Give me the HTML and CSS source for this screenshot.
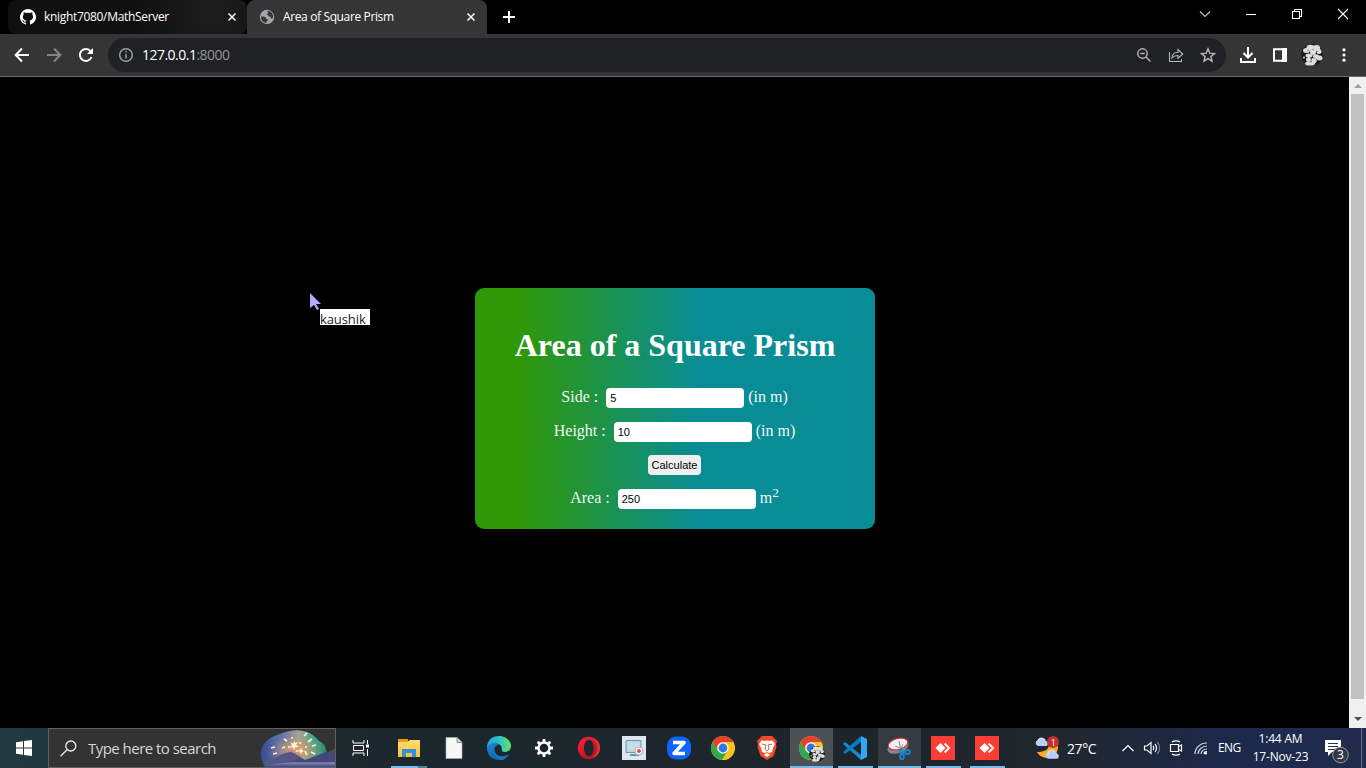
FILE: index.html
```html
<!DOCTYPE html>
<html lang="en">
<head>
<meta charset="utf-8">
<title>Area of Square Prism</title>
<link rel="stylesheet" href="styles.css">
</head>
<body>
<svg class="defs" width="0" height="0">
  <defs>
    <linearGradient id="edgeA" x1="0" y1="0" x2="1" y2="0"><stop offset="0" stop-color="#209fdf"/><stop offset=".55" stop-color="#2fc6c5"/><stop offset="1" stop-color="#6de05a"/></linearGradient>
    <linearGradient id="edgeB" x1="0" y1="0" x2="1" y2="1"><stop offset="0" stop-color="#1b8ddb"/><stop offset="1" stop-color="#0b4f97"/></linearGradient>
    <linearGradient id="opera" x1="0" y1="0" x2="1" y2="1"><stop offset="0" stop-color="#ff2436"/><stop offset="1" stop-color="#a90818"/></linearGradient>
    <linearGradient id="folder" x1="0" y1="0" x2="0" y2="1"><stop offset="0" stop-color="#ffdc72"/><stop offset="1" stop-color="#f8c13c"/></linearGradient>
    <linearGradient id="sky" x1="0" y1="0" x2="1" y2="0"><stop offset="0" stop-color="#334a91"/><stop offset=".3" stop-color="#6678a8"/><stop offset=".52" stop-color="#a9a396"/><stop offset=".72" stop-color="#32aa89"/><stop offset="1" stop-color="#287461"/></linearGradient>
    <radialGradient id="glow"><stop offset="0" stop-color="#e5a06c"/><stop offset="1" stop-color="#d09468" stop-opacity="0"/></radialGradient>
    <linearGradient id="lake" x1="0" y1="0" x2="0" y2="1"><stop offset="0" stop-color="#8d8fc0"/><stop offset="1" stop-color="#3d4584"/></linearGradient>
    <filter id="soft"><feGaussianBlur stdDeviation="1.2"/></filter>
    <symbol id="chrome" viewBox="0 0 24 24">
      <circle cx="12" cy="12" r="12" fill="#fbc116"/>
      <path d="M12 12 6.8 15 1.6 6A12 12 0 0 0 11 24l5.5-9Z" fill="#2da94f"/>
      <path d="M1.6 6A12 12 0 0 1 22.4 6H12a6 6 0 0 0-5.2 9Z" fill="#e34133"/>
      <path d="M22.4 6.5H12v5.5l5.2 3L11 24A12 12 0 0 0 22.4 6.5Z" fill="#fcc31b"/>
      <circle cx="12" cy="12" r="5.6" fill="#fff"/><circle cx="12" cy="12" r="4.4" fill="#2e77ea"/>
    </symbol>
    <symbol id="avatar" viewBox="0 0 22 22">
      <circle cx="11" cy="11" r="10.8" fill="#1b1b1b"/>
      <g fill="#dedede"><ellipse cx="5.500" cy="6.500" rx="3.500" ry="2.500"/><ellipse cx="9.500" cy="3.500" rx="4" ry="2.700"/><ellipse cx="15.500" cy="4" rx="3.500" ry="3"/><circle cx="18" cy="7.500" r="2.500"/><circle cx="12" cy="8" r="3"/><ellipse cx="8" cy="11.500" rx="3.500" ry="2"/><ellipse cx="15" cy="12.500" rx="3" ry="2.300"/><ellipse cx="18.500" cy="14" rx="3" ry="2.500"/><circle cx="7.500" cy="15.500" r="2.500"/><circle cx="13" cy="16.500" r="2.700"/><ellipse cx="9" cy="19.500" rx="5" ry="2"/><circle cx="3" cy="13.500" r="1"/></g>
      <g fill="#777"><circle cx="7" cy="6.500" r=".7"/><circle cx="12" cy="5.500" r=".7"/><circle cx="16" cy="7.500" r=".8"/><circle cx="9" cy="9.800" r=".7"/><circle cx="13" cy="14" r=".8"/><circle cx="10" cy="17.800" r=".7"/></g>
    </symbol>
    <symbol id="anydesk" viewBox="0 0 24 24"><path fill="#fb3e35" d="M0 0h24v24H0z"/><path fill="#fff" d="m4.500 12 5-5 5 5-5 5Z"/><path d="m13 7.500 4.500 4.500-4.500 4.500" transform="translate(.6)" fill="none" stroke="#fff" stroke-width="1.800"/></symbol>
    <symbol id="cloud" viewBox="0 0 14 9"><path d="M3 9a3 3 0 0 1-.2-5.800A4.400 4.400 0 0 1 11 4a2.600 2.600 0 0 1 .2 5Z" fill="#b7cffa"/><path d="M3 5.200A3.200 3.200 0 0 1 9 3" stroke="#dce8ff" fill="none"/></symbol>
  </defs>
</svg>
<div class="screen">
  <header class="tabstrip">
    <div class="tab tab-back">
      <svg class="favicon" viewBox="0 0 16 16"><path fill="#fff" d="M8 0a8 8 0 0 0-2.500 15.600c.4.1.5-.2.5-.4v-1.500c-2.200.5-2.700-.9-2.700-.9-.4-.9-.9-1.200-.9-1.200-.7-.5.1-.5.1-.5.8.1 1.200.8 1.200.8.7 1.300 1.900.9 2.300.7.1-.5.3-.9.5-1.100-1.800-.2-3.600-.9-3.600-4 0-.9.3-1.600.8-2.100-.1-.2-.4-1 .1-2.100 0 0 .7-.2 2.200.8a7.500 7.500 0 0 1 4 0c1.500-1 2.200-.8 2.200-.8.4 1.100.2 1.900.1 2.100.5.6.8 1.300.8 2.100 0 3.100-1.900 3.800-3.700 4 .3.200.6.700.6 1.500v2.200c0 .2.100.5.500.4A8 8 0 0 0 8 0Z"/></svg>
      <span class="tab-title github-title">knight7080/MathServer</span>
      <svg class="tab-close" viewBox="0 0 8 8"><path d="m.5.5 7 7m0-7-7 7"/></svg>
    </div>
    <div class="tab tab-front">
      <svg class="favicon globe" viewBox="0 0 16 16"><circle cx="8" cy="8" r="7.200" fill="#a0a5aa"/><path fill="#353637" d="M8.500 2c2.500-.2 4.500 1.500 5.300 3.700.4 1.400.3 2.600-.2 3.600-.8.700-1.700.2-1.800-.8-.1-.9-1.100-.8-1.800-1-.8-.3-.4-1-.9-1.300-.8-.5-1.400-.2-1.200-1 .1-.6 1-.4 1.200-1 .2-.7-.8-1.200-.6-2.200ZM2 7.500c1.800-.1 3.700-.1 4.500.7.6.7.3 1.500 1.100 1.800.8.200 1.500.2 1.500 1 0 .9-1.400.9-1.700 1.700-.2.500-.1.900-.3 1.300C4.300 13.500 2 11 2 7.500Z"/></svg>
      <span class="tab-title">Area of Square Prism</span>
      <svg class="tab-close" viewBox="0 0 8 8"><path d="m.5.5 7 7m0-7-7 7"/></svg>
    </div>
    <svg class="new-tab" viewBox="0 0 12 12"><path d="M6 0v12M0 6h12"/></svg>
    <div class="window-controls">
      <svg viewBox="0 0 12 12"><path d="m1 3.500 5 5 5-5"/></svg>
      <svg viewBox="0 0 12 12"><path d="M1 6.500h10"/></svg>
      <svg viewBox="0 0 12 12"><path d="M1.500 3.500h7v7h-7zM3.500 3V1.500h7v7H9"/></svg>
      <svg viewBox="0 0 12 12"><path d="m1 1 10 10m0-10L1 11"/></svg>
    </div>
  </header>
  <nav class="toolbar">
    <div class="navigation">
      <svg viewBox="0 0 16 16"><path d="M15 8H2m6-6.500L1.700 8 8 14.500"/></svg>
      <svg class="disabled" viewBox="0 0 16 16"><path d="M1 8h13M8 1.500 14.300 8 8 14.500"/></svg>
      <svg viewBox="0 0 16 16"><path d="M13.500 10.200A6 6 0 1 1 12.700 4.300L14 5.600"/><path class="filled" d="M15 1v6H9Z"/></svg>
    </div>
    <div class="address">
      <svg class="info" viewBox="0 0 16 16"><circle cx="8" cy="8" r="6.300"/><path d="M8 7v4.500M8 4v1.600"/></svg>
      <span class="url">127.0.0.1<span>:8000</span></span>
      <div class="address-actions">
        <svg viewBox="0 0 16 16"><circle cx="6.500" cy="6.500" r="4.700"/><path d="M4.300 6.500h4.400M10 10l4.500 4.500"/></svg>
        <svg class="share" viewBox="0 0 16 16"><path d="M1.500 5v9.500h12V12M4 11c.3-3.800 2-5.600 6-5.700V2.500L14.800 7 10 11.200V8.500C7.500 8.400 5.600 9.200 4 11Z"/></svg>
        <svg viewBox="0 0 16 16"><path d="m8 1.800 1.800 4.300 4.700.4-3.600 3.100 1.100 4.600-4-2.500-4 2.500 1.100-4.600-3.600-3.100 4.700-.4Z"/></svg>
      </div>
    </div>
    <div class="browser-actions">
      <svg viewBox="0 0 16 16"><path d="M8 0v10M3.500 6 8 10.500 12.500 6M1 11v4h14v-4"/></svg>
      <svg viewBox="0 0 16 16"><path d="M2 2.200h12v11.600H2z"/><path class="filled" d="M10 1h5v14h-5z"/></svg>
      <svg class="avatar"><use href="#avatar"/></svg>
      <svg class="more" viewBox="0 0 16 16"><circle cx="8" cy="2.800" r="1.600"/><circle cx="8" cy="8" r="1.600"/><circle cx="8" cy="13.200" r="1.600"/></svg>
    </div>
  </nav>
  <main class="viewport">
    <section class="page">
      <form class="calculator">
        <h1>Area of a Square Prism</h1>
        <div class="field"><label for="side">Side :</label><input id="side" value="5"><span>(in m)</span></div>
        <div class="field"><label for="height">Height :</label><input id="height" value="10"><span>(in m)</span></div>
        <button type="button">Calculate</button>
        <div class="field"><label for="area">Area :</label><input id="area" value="250"><span>m<sup>2</sup></span></div>
      </form>
    </section>
    <aside class="scrollbar"><i class="arrow up"></i><i class="thumb"></i><i class="arrow down"></i></aside>
    <div class="pointer">
      <svg viewBox="0 0 12 18"><path d="M0 0v15l4-3 3 5 2-1-3-5h5Z" fill="#b2aafb"/></svg>
      <span>kaushik</span>
    </div>
  </main>
  <footer class="taskbar">
    <div class="start"><svg viewBox="0 0 16 16"><path fill="#fff" d="M0 2.300 7 1.200v6.300H0ZM8 1l8-1v7.500H8ZM0 8.500h7v6.300l-7-1.100Zm8 0h8V16l-8-1Z"/></svg></div>
    <div class="search">
      <svg class="search-icon" viewBox="0 0 17 17"><circle cx="10.800" cy="6" r="5"/><path d="M7 9.700.5 16.300"/></svg>
      <span>Type here to search</span>
      <svg class="fireworks" viewBox="0 0 75 38">
        <clipPath id="sceneClip"><path d="M5 38C-5 22 4 9 20 5c16-7 31-4 39 7 6 2 7 8 8 12l8-4v18Z"/></clipPath>
        <g clip-path="url(#sceneClip)"><path d="M0 0h75v38H0z" fill="url(#sky)"/><ellipse cx="37" cy="21" rx="28" ry="15" fill="url(#glow)"/><path d="m10 33 13-8 8-2 14 8 16-6 14-6v17H5Z" fill="#444878"/><path d="m3 38 4-7 10-3 14-5 10 5-7 4Z" fill="#545685" filter="url(#soft)"/><path d="M3 38c16-7 47-4 72-5v5Z" fill="url(#lake)"/></g>
        <g fill="none" stroke="#fff2d5" stroke-width="1.700"><path d="m24 10 3 2M11 19l4-1m-2 7 4-1m5-5 3-1m19-11 3-3m1 9 4-3m0 7 4-1m-5 7 4 2m-10-3 2 4"/></g>
        <g fill="#fff6de"><path d="m34 11 1 3 3-1-2 3 3 2-4 .2-1 3-1-3-4 .2 3-2-1-3 3 1ZM41 19l1 2 2 1-2 1-1 2-1-2-2-1 2-1Z"/><circle cx="32" cy="9" r="1"/><circle cx="40" cy="14" r="1"/><circle cx="29" cy="18" r="1"/><circle cx="37" cy="22" r="1"/><circle cx="46" cy="18" r="1"/></g>
      </svg>
    </div>
    <div class="task-view"><svg viewBox="0 0 17 16"><path d="M1 0v3h11V0M1 16v-3h11v3M1.500 5.500h10v5h-10zM15.500 0v4m0 5v7"/><path class="filled" d="M14 4.500h3v3h-3z"/></svg></div>
    <div class="apps">
      <div class="app running explorer"><svg viewBox="0 0 24 24"><path d="M1 3h10v4H1Z" fill="#e99a0b"/><path d="M1 6h9l3-2h10v17H1Z" fill="url(#folder)"/><path d="M5 21v-8h14v8h-4v-4H9v4Z" fill="#3690d8"/></svg></div>
      <div class="app"><svg viewBox="0 0 24 24"><path d="M4 1.500h11l5 5v16H4Z" fill="#f6f7f7" stroke="#a7aaac" stroke-width=".7"/><path d="M15 1.500v5h5" fill="#d7d8d9" stroke="#8c8f91"/></svg></div>
      <div class="app"><svg viewBox="0 0 24 24"><path d="M0 12C0 4 5 0 12 0c7 0 12 5 12 10 0 4-3 6-6 6-5 0-2-3-4-6C11 6 4 6 0 12Z" fill="url(#edgeA)"/><path d="M0 12C2 7 8 5 12 8.500 7 9 6 14 9 18c3 4 8 4 12 1-2 3-5 5-9 5C5 24 0 19 0 12Z" fill="url(#edgeB)"/><path d="M8 12c-2 9 9 10 14 6-2 4-5 6-8 6-5 0-9-6-6-12Z" fill="#1477bd"/></svg></div>
      <div class="app"><svg viewBox="0 0 24 24"><g fill="none" stroke="#fff"><circle cx="12" cy="12" r="5.500" stroke-width="2.400"/><path d="M12 3v3.500m0 11V21M3 12h3.500m11 0H21M5.700 5.700l2.300 2.300m8 8 2.300 2.300m0-12.600L16 8m-8 8-2.300 2.300" stroke-width="2.800"/></g></svg></div>
      <div class="app"><svg viewBox="0 0 24 24"><path fill="url(#opera)" fill-rule="evenodd" d="M12 .8a11.200 11.200 0 1 0 0 22.400A11.200 11.200 0 0 0 12 .8Zm0 3.200c3 0 4.700 3.500 4.700 8S15 20 12 20s-5-3.500-5-8 2-8 5-8Z"/><path fill="#d2333c" d="M14 3c4 1 6 5 6 9s-2 8-6 9c5 1 9-3 9-9s-4-10-9-9Z"/></svg></div>
      <div class="app"><svg viewBox="0 0 24 24"><path fill="#dbe7f1" d="M0 0h24v24H0z"/><path d="M4 4.500h15v12H4Z" fill="#bfd5e4" stroke="#6e96b2"/><path d="M6 7h11v7H6z" fill="#c8dcea"/><path d="M8 19h9" stroke="#507792" stroke-width="1.500"/><circle cx="17" cy="15" r="4" fill="#f4f4f5" stroke="#a9b7c0"/><circle cx="17" cy="15" r="2" fill="#ef4650"/></svg></div>
      <div class="app"><svg viewBox="0 0 24 24"><rect width="24" height="23" y=".5" rx="9" fill="#1162fb"/><path d="M6 6.500h11L7 17.500h11" fill="none" stroke="#fff" stroke-width="3.500" stroke-linejoin="round"/></svg></div>
      <div class="app"><svg><use href="#chrome"/></svg></div>
      <div class="app"><svg viewBox="0 0 24 24"><path fill="#fb4926" d="m4 3 3-3h10l3 3 2 2-1 3 .5 3-3 9-6.500 4-6.500-4-3-9L3 8 2 5Z"/><path fill="#fff" d="m7 4 2 1 3-.5 3 .5 2-1 3 4-2 4-1 4-3 1 1 2-3 2-3-2 1-2-3-1-1-4-2-4Z"/><path d="m7 8 4 1-1 4 2 2 2-2-1-4 4-1M9.500 18l2.500-1.500 2.500 1.500" fill="none" stroke="#ef5635" stroke-width="1"/></svg></div>
      <div class="app running active profile-browser"><svg><use href="#chrome"/></svg><svg class="profile-badge"><use href="#avatar"/></svg></div>
      <div class="app running"><svg viewBox="0 0 24 24"><path d="m0 8 2-2 16 13v5Z" fill="#168bd5"/><path d="M0 16 18 0v6L2 18Z" fill="#087bc6"/><path d="m18 0 6 3v18l-6 3Z" fill="#32a7ef"/></svg></div>
      <div class="app running selected"><svg viewBox="0 0 24 24"><ellipse cx="11" cy="11" rx="11" ry="6" transform="rotate(-20 11 11)" fill="#85898c"/><ellipse cx="11" cy="8" rx="10" ry="5.500" transform="rotate(-15 11 8)" fill="#f1f2f3" stroke="#cf3533" stroke-width="1.200"/><path d="m12 5 2 10M8 10l6 2.500m2-4-3 5" fill="none" stroke="#85898c" stroke-width="1"/><g fill="none" stroke="#1688d0" stroke-width="1.800"><ellipse cx="15" cy="20.500" rx="2" ry="2.500"/><ellipse cx="20.500" cy="16" rx="2.500" ry="2"/><path d="m14 13 1.500 5m2.500-2-6-1"/></g></svg></div>
      <div class="app running"><svg><use href="#anydesk"/></svg></div>
      <div class="app running"><svg><use href="#anydesk"/></svg></div>
    </div>
    <div class="weather">
      <svg viewBox="0 0 26 24"><path d="M13 5c4 4 2 11-10 11 4 8 20 9 21-5 0-4-4-7-11-6Z" fill="#ffad25"/><use href="#cloud" x="1" y="1" width="14" height="9"/><use href="#cloud" x="11" y="13" width="15" height="10"/><circle cx="19" cy="6" r="6" fill="#c62f2b"/><text x="19" y="9.700" text-anchor="middle">1</text></svg>
      <span>27°C</span>
    </div>
    <div class="tray">
      <svg viewBox="0 0 16 16"><path d="m2.500 11 5.500-5.500 5.500 5.500"/></svg>
      <svg class="volume" viewBox="0 0 18 16"><path d="M1.500 6H4l4-3.500v11L4 10H1.500ZM10 6c1 1 1 3 0 4m2-6c2 2 2 6 0 8"/><path opacity=".4" d="M14.300 2c3 3 3 9 0 12"/></svg>
      <svg class="camera" viewBox="0 0 16 16"><path d="M2.500 4.500h8v7h-8zm8 2 3-1.500v6l-3-1.500M4 2c2-1.500 6-1.500 8 0M4 14c2 1.500 6 1.500 8 0"/></svg>
      <svg viewBox="0 0 16 16"><g opacity=".8"><path d="M2 14C2 8 7 3 14 3M5 14c0-4 4-8 9-8M8 14c0-3 3-5 6-5"/></g><path d="M11 14c0-1.500 1.500-2.500 3-2.500"/><circle class="filled" cx="12.700" cy="13.200" r="1.300"/></svg>
    </div>
    <span class="language">ENG</span>
    <div class="clock"><span>1:44 AM</span><span class="date">17-Nov-23</span></div>
    <div class="notifications"><svg viewBox="0 0 26 26"><path fill="#fff" d="M1 2h16v12H8l-4 4v-4H1Z"/><path d="M4 5.500h10M4 8.500h10M4 11.500h7" stroke="#293654"/><circle cx="16.500" cy="17" r="7.800" fill="#343941" stroke="#90959c"/><text x="16.500" y="21.300" text-anchor="middle">3</text></svg></div>
  </footer>
</div>
</body>
</html>
```
FILE: styles.css
```css
* { box-sizing: border-box; }
body { margin: 0; overflow: hidden; background: #000; font-family: "Open Sans", "Noto Sans", sans-serif; }
svg { display: block; flex: none; }
.defs { position: absolute; }
.screen { display: flex; flex-direction: column; width: 1366px; height: 768px; background: #000; }
.tabstrip { display: flex; height: 34px; padding-left: 8px; color: #fff; }
.tab { display: flex; align-items: center; width: 239px; padding: 0 10px 0 12px; border-radius: 8px 8px 0 0; }
.tab-back { border-radius: 8px; background: radial-gradient(circle at 205px 10px, #1d1d1d, #101010 80px); }
.tab-front { width: 240px; background: #353535; }
.favicon { width: 16px; height: 16px; margin-right: 8px; }
.tab-title { flex: 1; padding-bottom: 1px; font-size: 12px; letter-spacing: -.37px; white-space: nowrap; }
.github-title { letter-spacing: -.32px; }
.tab-close { width: 8px; height: 8px; stroke: #fff; stroke-width: 1.5; }
.tab-back .tab-close { margin-right: 1px; }
.tab-front .tab-close { margin-right: 2px; }
.new-tab { width: 12px; height: 12px; margin: 11px 0 0 16px; stroke: #fff; stroke-width: 2; }
.window-controls { display: flex; gap: 34px; margin-left: auto; padding: 8px 17px 0 0; }
.window-controls svg { width: 12px; height: 12px; fill: none; stroke: #fff; stroke-width: 1.1; }
.window-controls svg:first-child { stroke: #c8c8c8; }
.toolbar { display: flex; align-items: center; height: 43px; background: #353535; border-bottom: 1px solid #6a6a6a; }
.navigation { display: flex; gap: 16px; width: 108px; padding-left: 14px; }
.navigation svg { width: 16px; height: 16px; fill: none; stroke: #fff; stroke-width: 2; }
.navigation .disabled { stroke: #858585; }
.navigation .filled, .browser-actions .filled, .task-view .filled, .tray .filled { fill: #fff; stroke: none; }
.address { display: flex; align-items: center; width: 1118px; height: 34px; padding: 0 10px; border-radius: 17px; background: #202124; }
.info { width: 16px; height: 16px; margin-right: 8px; fill: none; stroke: #9aa0a6; stroke-width: 1.5; }
.url { padding-bottom: 2px; color: #fff; font-size: 14px; letter-spacing: -.52px; }
.url span { color: #929292; }
.address-actions { display: flex; gap: 16px; margin-left: auto; }
.address-actions svg { width: 16px; height: 16px; fill: none; stroke: #b7b7b7; stroke-width: 1.4; }
.address-actions .share { stroke-width: 1.1; }
.browser-actions { display: flex; align-items: center; padding-left: 14px; }
.browser-actions svg { width: 16px; height: 16px; margin-right: 16px; fill: none; stroke: #fff; stroke-width: 2; }
.browser-actions .avatar { width: 22px; height: 22px; margin: 0 13px 0 -3px; stroke: none; }
.browser-actions .more { margin-right: 0; fill: #fff; stroke: none; }
.viewport { position: relative; display: flex; height: 651px; background: #000; }
.page { width: 1349px; padding: 211px 0 0 475px; }
.calculator { display: flex; flex-direction: column; align-items: center; width: 400px; height: 241px; padding-top: 39px; border-radius: 9px; background: linear-gradient(90deg, #2f9807 11%, #088d96 56%); color: #fff; font-family: "Liberation Serif", serif; font-size: 16px; }
.calculator h1 { margin: 0 0 24px; font-size: 32px; line-height: 37px; white-space: nowrap; }
.field { display: flex; align-items: center; height: 20px; margin: 0 1px 14px 0; line-height: 18px; white-space: nowrap; color: #f2f7f2; }
.field label { margin-right: 8px; }
.field > span { margin-left: 4px; }
.field label, .field > span { padding-bottom: 2px; }
.field input { width: 138px; height: 20px; padding: 1px 4px; border: 0; border-radius: 4px; background: #fff; font: 11px "Liberation Sans", sans-serif; }
.calculator button { width: 53px; height: 20px; margin: -1px 1px 14px 0; padding: 0; border: 0; border-radius: 4px; background: #efefef; color: #000; font: 11px "Liberation Sans", sans-serif; }
.field sup { font-size: 13.3px; line-height: 0; }
.scrollbar { display: flex; flex-direction: column; align-items: center; width: 17px; height: 651px; background: #f0f0f0; }
.arrow { width: 0; height: 0; border: 4px solid transparent; }
.up { margin-top: 3px; border-bottom-color: #a1a1a1; }
.thumb { width: 13px; height: 605px; margin-top: 6px; background: #c1c1c1; }
.down { margin-top: 18px; border-top-color: #505050; }
.pointer { position: absolute; left: 310px; top: 216px; }
.pointer svg { width: 12px; height: 18px; }
.pointer span { display: block; width: 50px; height: 16px; margin: -2px 0 0 10px; background: #fff; color: #222; font-size: 13px; line-height: 20px; letter-spacing: -.1px; }
.taskbar { display: flex; align-items: center; height: 40px; background: linear-gradient(90deg, #233a42, #1c282e 27%, #1d252b 65%, #20272f 78%, #1c294b 90%, #202b4e); color: #fff; }
.taskbar > * { flex: none; }
.start { display: flex; justify-content: center; width: 48px; }
.start svg { width: 16px; height: 16px; }
.search { display: flex; align-items: center; width: 288px; height: 40px; padding-left: 11px; border: 1px solid #606060; background: #333; color: #d7d7d7; font-size: 15px; letter-spacing: -.53px; white-space: nowrap; }
.search-icon { width: 17px; height: 17px; margin-right: 11px; fill: none; stroke: #eee; stroke-width: 1.3; }
.fireworks { width: 75px; height: 38px; margin-left: auto; }
.task-view { display: flex; justify-content: center; width: 50px; }
.task-view svg { width: 17px; height: 16px; margin-right: 2px; fill: none; stroke: #fff; }
.apps { display: flex; width: 623px; height: 40px; }
.app { position: relative; display: flex; align-items: center; justify-content: center; width: 44px; }
.app:nth-child(-n+7) { width: 45px; }
.app svg { width: 24px; height: 24px; }
.running::after { content: ""; position: absolute; bottom: 0; left: 5px; right: 4px; height: 2px; background: #76b9ed; }
.explorer::after { background: linear-gradient(90deg, #76b9ed 27px, #4a81a9 27px); }
.active { background: linear-gradient(90deg, transparent 1px, #4b5155 1px); }
.selected { background: linear-gradient(90deg, transparent 1px, #343b40 1px); }
.active::after, .selected::after { left: 1px; right: 0; }
.app .profile-badge { position: absolute; left: 20px; top: 18px; width: 16px; height: 16px; }
.weather { display: flex; align-items: center; gap: 7px; width: 112px; padding-left: 25px; font-size: 14px; letter-spacing: -.4px; }
.weather svg { width: 26px; height: 24px; }
.weather text { fill: #fff; font: 9px "Open Sans", sans-serif; }
.tray { display: flex; align-items: center; width: 97px; gap: 8px; }
.tray svg { width: 16px; height: 16px; margin-left: -1px; fill: none; stroke: #fff; stroke-width: 1.2; }
.tray .volume { width: 18px; }
.tray svg:last-child { margin-left: 1px; }
.language { width: 31px; padding-bottom: 1px; font-size: 12px; letter-spacing: -.55px; }
.clock { display: flex; flex-direction: column; align-items: center; width: 63px; padding-bottom: 1px; font-size: 12px; line-height: 18px; letter-spacing: -.2px; white-space: nowrap; }
.notifications { display: flex; align-items: center; width: 37px; margin: 5px 0 0 12px; }
.notifications svg { width: 26px; height: 26px; }
.notifications text { fill: #fff; font: 12px "Open Sans", sans-serif; }
.taskbar::after { content: ""; width: 1px; height: 40px; margin-left: auto; margin-right: 4px; background: #68718b; }
```
